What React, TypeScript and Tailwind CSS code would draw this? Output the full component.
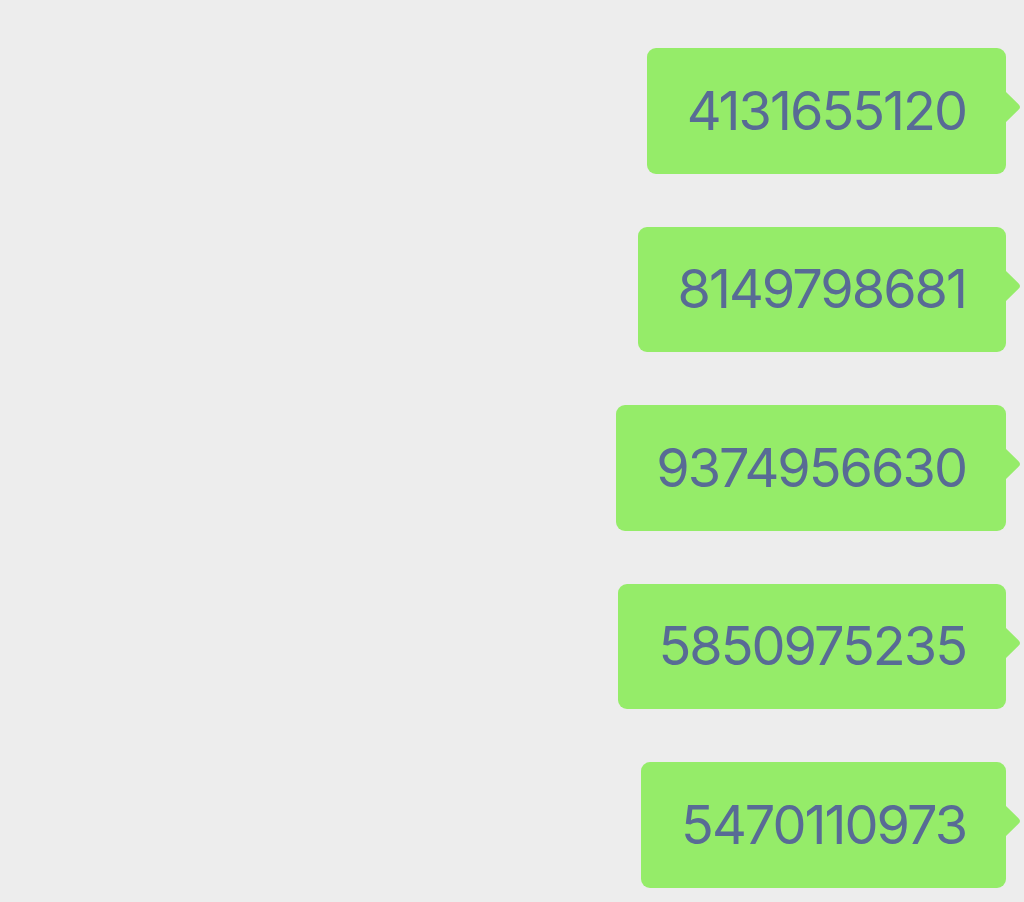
const messages = ["4131655120", "8149798681", "9374956630", "5850975235", "5470110973"];

function Bubble({ text }: { text: string }) {
  return (
    <div className="relative flex h-[125.5px] items-center rounded-[9px] bg-[#95ec69] px-10">
      <span className="text-[54px] leading-none tracking-[-2px] text-[#586b95] [font-family:Inter,'Liberation_Sans',sans-serif]">
        {text}
      </span>
      <svg className="absolute left-full top-[44px]" width="16" height="30" viewBox="0 0 16 30">
        <path d="M0 0 L12.5 12.2 Q15.5 15 12.5 17.8 L0 30 Z" fill="#95ec69" />
      </svg>
    </div>
  );
}

export default function App() {
  return (
    <div className="flex min-h-[902px] w-full flex-col items-end gap-[53px] bg-[#ededed] pr-[18px] pt-[48px]">
      {messages.map((m) => (
        <Bubble key={m} text={m} />
      ))}
    </div>
  );
}
